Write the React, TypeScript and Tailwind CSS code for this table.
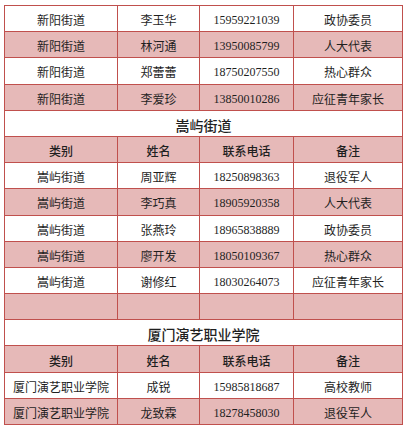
type Row = [string, string, string, string];

const xinyang: Row[] = [
  ["新阳街道", "李玉华", "15959221039", "政协委员"],
  ["新阳街道", "林河通", "13950085799", "人大代表"],
  ["新阳街道", "郑蕾蕾", "18750207550", "热心群众"],
  ["新阳街道", "李爱珍", "13850010286", "应征青年家长"],
];

const songyu: Row[] = [
  ["嵩屿街道", "周亚辉", "18250898363", "退役军人"],
  ["嵩屿街道", "李巧真", "18905920358", "人大代表"],
  ["嵩屿街道", "张燕玲", "18965838889", "政协委员"],
  ["嵩屿街道", "廖开发", "18050109367", "热心群众"],
  ["嵩屿街道", "谢修红", "18030264073", "应征青年家长"],
];

const xiamen: Row[] = [
  ["厦门演艺职业学院", "成锐", "15985818687", "高校教师"],
  ["厦门演艺职业学院", "龙致霖", "18278458030", "退役军人"],
];

const cell = "border border-[#c0504d] text-center align-middle p-0 pt-[3px]";
const cjk = { fontFamily: '"Noto Sans CJK SC", sans-serif' };
const num = { fontFamily: '"Liberation Serif", serif' };

function DataRow({ row, pink }: { row: Row; pink: boolean }) {
  return (
    <tr className={`h-[26.2px] ${pink ? "bg-[#e6b9b8]" : "bg-white"}`}>
      <td className={cell} style={cjk}>{row[0]}</td>
      <td className={cell} style={cjk}>{row[1]}</td>
      <td className={cell} style={num}>{row[2]}</td>
      <td className={cell} style={cjk}>{row[3]}</td>
    </tr>
  );
}

function Title({ text }: { text: string }) {
  return (
    <tr className="h-[26.2px] bg-white">
      <td colSpan={4} className={`${cell} text-[14px] font-medium`} style={cjk}>{text}</td>
    </tr>
  );
}

function Header() {
  return (
    <tr className="h-[26.2px] bg-[#e6b9b8]">
      {["类别", "姓名", "联系电话", "备注"].map((h) => (
        <td key={h} className={`${cell} font-medium`} style={cjk}>{h}</td>
      ))}
    </tr>
  );
}

export default function App() {
  return (
    <div className="w-[406px] h-[430px] bg-white pl-[4px] pt-[5px] overflow-hidden">
      <table className="table-fixed border-collapse w-[398px] text-[12px] leading-none text-[#1f1f1f]">
        <colgroup>
          <col className="w-[113px]" />
          <col className="w-[82px]" />
          <col className="w-[94px]" />
          <col className="w-[109px]" />
        </colgroup>
        <tbody>
          {xinyang.map((r, i) => <DataRow key={r[1]} row={r} pink={i % 2 === 1} />)}
          <Title text="嵩屿街道" />
          <Header />
          {songyu.map((r, i) => <DataRow key={r[1]} row={r} pink={i % 2 === 1} />)}
          <tr className="h-[26.2px] bg-[#e6b9b8]">
            <td className={cell}></td>
            <td className={cell}></td>
            <td className={cell}></td>
            <td className={cell}></td>
          </tr>
          <Title text="厦门演艺职业学院" />
          <Header />
          {xiamen.map((r, i) => <DataRow key={r[1]} row={r} pink={i % 2 === 1} />)}
        </tbody>
      </table>
    </div>
  );
}
